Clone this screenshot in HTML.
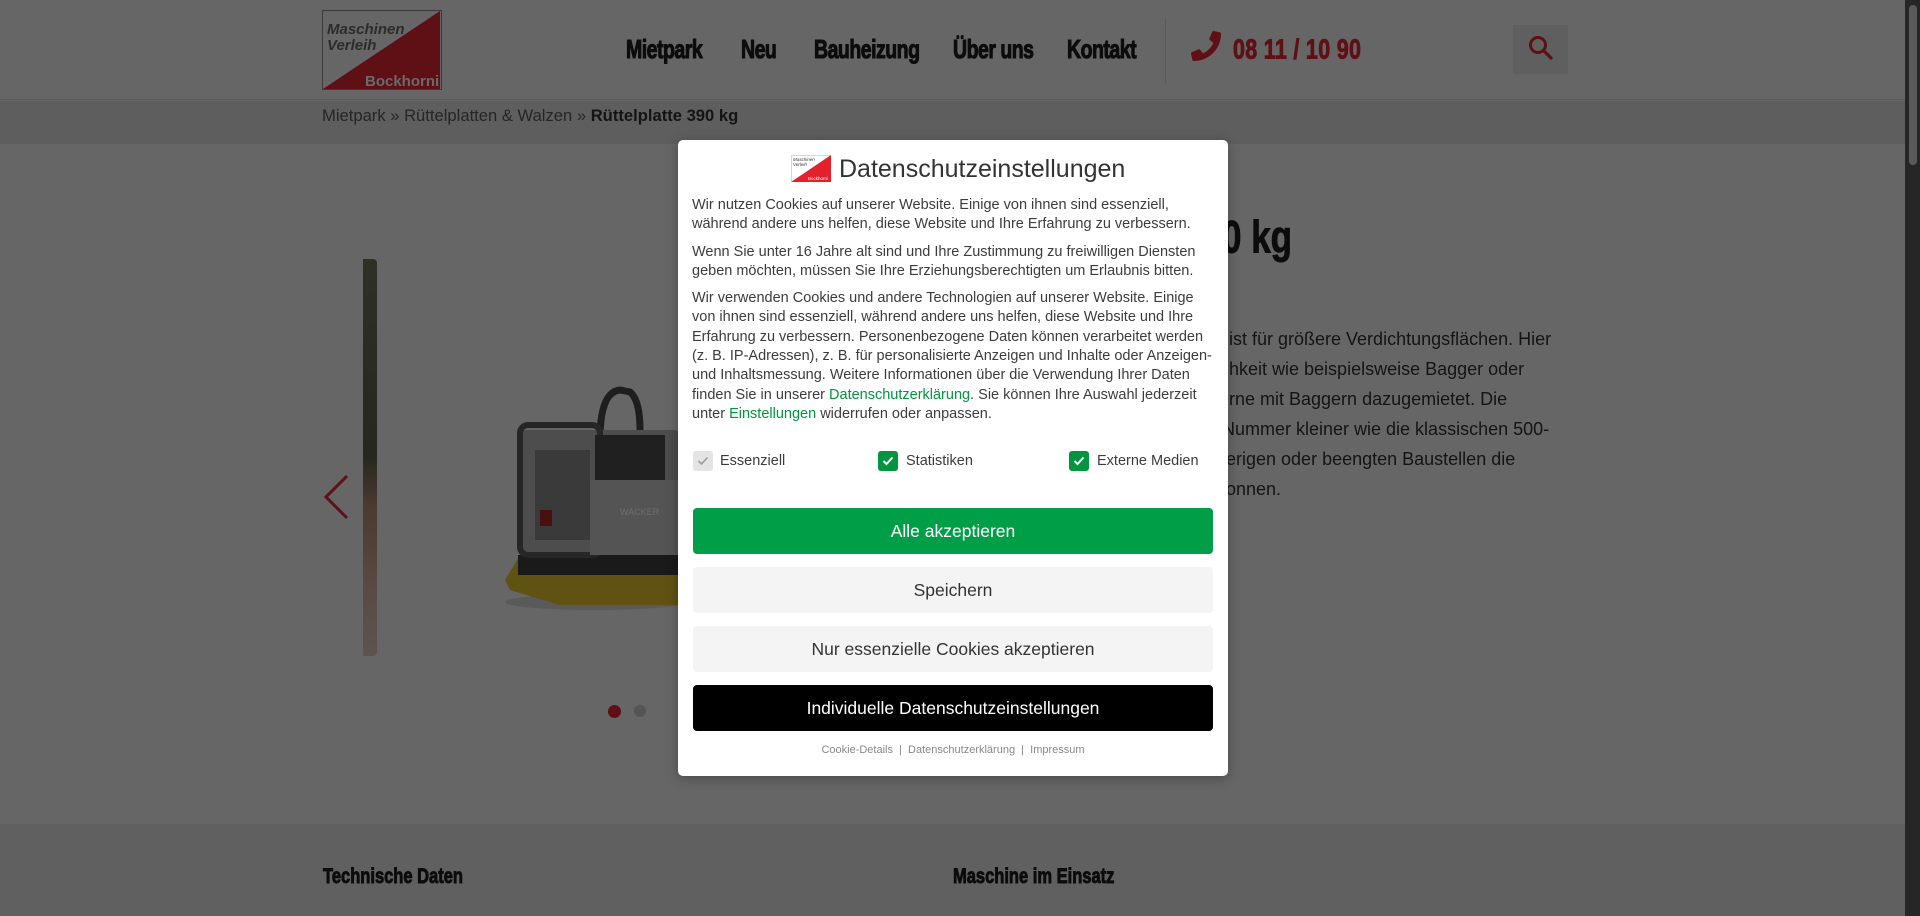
<!DOCTYPE html>
<html><head><meta charset="utf-8"><style>
*{margin:0;padding:0;box-sizing:border-box}
body{width:1920px;height:916px;overflow:hidden;background:#666;position:relative;font-family:"Liberation Sans",sans-serif}
.a{position:absolute;white-space:nowrap}
.nav{font-family:"Liberation Sans Narrow","Liberation Sans",sans-serif;font-weight:bold;color:#0c0c0c;font-size:19.5px;transform:scaleY(1.35);transform-origin:left center;letter-spacing:-0.5px;-webkit-text-stroke:0.8px #0c0c0c}
.cond{font-family:"Liberation Sans Narrow","Liberation Sans",sans-serif;font-weight:bold;transform:scaleY(1.3);transform-origin:left top;-webkit-text-stroke:0.7px currentColor}
.pt{color:#141414;font-size:18px;line-height:30px}
.modal{position:absolute;left:678px;top:140px;width:550px;height:636px;background:#fff;border-radius:5px;box-shadow:0 2px 12px rgba(0,0,0,.3)}
.m{position:absolute;white-space:nowrap;color:#3c3c3c}
.body p{font-size:14.5px;line-height:19.3px;color:#3c3c3c}
.body a{color:#019540;text-decoration:none}
.btn{position:absolute;left:15px;width:520px;height:46px;border-radius:4px;text-align:center;line-height:46px;font-size:17.5px}
.cb{position:absolute;top:311px;width:20px;height:20px;border-radius:3px;background:#019540}
.cb svg{position:absolute;left:4px;top:5px}
.cl{position:absolute;top:311px;line-height:20px;font-size:14.5px;color:#3c3c3c}
</style></head><body>
<div class="a" style="left:0;top:0;width:1905px;height:100px;border-bottom:1px solid #5a5a5a;background:#666"></div>
<svg class="a" style="left:322px;top:10px" width="120" height="80" viewBox="0 0 120 80">
<rect x="0.5" y="0.5" width="119" height="79" fill="#666" stroke="#3a3a3a"/>
<polygon points="118,1 118,79 1,79" fill="#5e1014"/>
<text x="5" y="24" font-family="Liberation Sans" font-style="italic" font-weight="bold" font-size="15" fill="#2c2c2c">Maschinen</text>
<text x="5" y="40" font-family="Liberation Sans" font-style="italic" font-weight="bold" font-size="15" fill="#2c2c2c">Verleih</text>
<text x="43" y="76" font-family="Liberation Sans" font-weight="bold" font-size="15" fill="#6a6a6a">Bockhorni</text>
</svg>
<div class="a nav" style="left:626px;top:39px">Mietpark</div>
<div class="a nav" style="left:741px;top:39px">Neu</div>
<div class="a nav" style="left:814px;top:39px">Bauheizung</div>
<div class="a nav" style="left:953px;top:39px">Über uns</div>
<div class="a nav" style="left:1067px;top:39px">Kontakt</div>
<div class="a" style="left:1165px;top:18px;width:1px;height:66px;background:#5a5a5a"></div>
<svg class="a" style="left:1191px;top:31px" width="30" height="30" viewBox="0 0 512 512"><path fill="#5e1014" d="M497 361l-112-48a24 24 0 0 0-28 7l-50 61A371 371 0 0 1 130 204l61-50a24 24 0 0 0 7-28L150 14a24 24 0 0 0-27-14L19 24A24 24 0 0 0 0 48c0 256 208 464 464 464a24 24 0 0 0 24-19l24-104a24 24 0 0 0-15-28z" transform="scale(-1,1) translate(-512,0)"/></svg>
<div class="a cond" style="left:1233px;top:34px;font-size:21.5px;color:#5e1014;letter-spacing:0.3px">08 11 / 10 90</div>
<div class="a" style="left:1513px;top:25px;width:55px;height:49px;background:#5f5f5f"></div>
<svg class="a" style="left:1528px;top:35px" width="26" height="26" viewBox="0 0 26 26"><circle cx="10" cy="10" r="7.5" fill="none" stroke="#5e1014" stroke-width="3"/><line x1="15.5" y1="15.5" x2="23" y2="23" stroke="#5e1014" stroke-width="3.2" stroke-linecap="round"/></svg>
<div class="a" style="left:0;top:101px;width:1905px;height:43px;background:#5e5e5e"></div>
<div class="a" style="left:322px;top:106px;font-size:16.6px;line-height:20px;color:#252525">Mietpark » Rüttelplatten &amp; Walzen » <b style="color:#141414">Rüttelplatte 390 kg</b></div>
<svg class="a" style="left:320px;top:472px" width="32" height="50" viewBox="0 0 32 50"><polyline points="27,4 6,25 27,46" fill="none" stroke="#5e1014" stroke-width="3"/></svg>
<div class="a" style="left:363px;top:259px;width:14px;height:397px;border-radius:0 4px 4px 0;background:linear-gradient(#2e3026,#26281f 50%,#4a3a30 62%,#5a4c44 85%,#5c5450)"></div>
<svg class="a" style="left:500px;top:370px" width="180" height="240" viewBox="0 0 180 240">
<ellipse cx="95" cy="232" rx="90" ry="8" fill="#5a5a5a"/>
<path d="M100 70 Q100 22 120 20 L130 22 Q140 30 140 60" fill="none" stroke="#1e1e1e" stroke-width="7"/>
<path d="M5 210 L20 185 L180 185 L180 235 L60 235 L10 220 Z" fill="#5f5212"/>
<rect x="18" y="185" width="162" height="20" fill="#1a1a1a"/>
<rect x="20" y="60" width="160" height="125" rx="6" fill="#4d4d4d"/>
<rect x="20" y="55" width="80" height="130" rx="8" fill="none" stroke="#262626" stroke-width="6"/>
<rect x="90" y="110" width="90" height="75" fill="#545454"/>
<rect x="35" y="80" width="55" height="90" fill="#3a3a3a"/>
<rect x="95" y="65" width="70" height="45" fill="#202020"/>
<rect x="40" y="140" width="12" height="16" fill="#4a1010"/>
<text x="120" y="145" font-size="9" fill="#6e6e6e" font-family="Liberation Sans">WACKER</text>
</svg>
<div class="a" style="left:608px;top:705px;width:13px;height:13px;border-radius:50%;background:#5e1014"></div>
<div class="a" style="left:634px;top:705px;width:12px;height:12px;border-radius:50%;background:#545454"></div>
<div class="a cond" style="left:1222px;top:212px;font-size:35px;color:#0c0c0c">0 kg</div>
<div class="a pt" style="left:1229px;top:324px">ist für größere Verdichtungsflächen. Hier</div>
<div class="a pt" style="left:1229px;top:354px">hkeit wie beispielsweise Bagger oder</div>
<div class="a pt" style="left:1229px;top:384px">rne mit Baggern dazugemietet. Die</div>
<div class="a pt" style="left:1222px;top:414px">Nummer kleiner wie die klassischen 500-</div>
<div class="a pt" style="left:1226px;top:444px">erigen oder beengten Baustellen die</div>
<div class="a pt" style="left:1226px;top:474px">onnen.</div>
<div class="a" style="left:0;top:824px;width:1905px;height:92px;background:#606060"></div>
<div class="a cond" style="left:323px;top:865px;font-size:16.5px;color:#0c0c0c">Technische Daten</div>
<div class="a cond" style="left:953px;top:865px;font-size:16.5px;color:#0c0c0c">Maschine im Einsatz</div>
<div class="a" style="left:1905px;top:0;width:15px;height:916px;background:#262626"></div>
<div class="a" style="left:1909px;top:5px;width:8px;height:160px;border-radius:4px;background:#5a5a5a"></div>
<div class="modal">
<svg class="m" style="left:113px;top:15px" width="40" height="27" viewBox="0 0 40 27"><rect x="0.5" y="0.5" width="39" height="26" fill="#fff" stroke="#bbb" stroke-width=".6"/><polygon points="40,0 40,27 0,27" fill="#e2212a"/><text x="2" y="6" font-size="4.5" font-style="italic" fill="#333" font-family="Liberation Sans">Maschinen</text><text x="2" y="11" font-size="4.5" font-style="italic" fill="#333" font-family="Liberation Sans">Verleih</text><text x="17" y="25" font-size="4.5" fill="#fff" font-family="Liberation Sans">Bockhorni</text></svg>
<div class="m" style="left:161px;top:13px;font-size:25px;line-height:32px;color:#333">Datenschutzeinstellungen</div>
<div class="m body" style="left:14px;top:56px">
<p>Wir nutzen Cookies auf unserer Website. Einige von ihnen sind essenziell,<br>während andere uns helfen, diese Website und Ihre Erfahrung zu verbessern.</p>
<p style="margin-top:8px">Wenn Sie unter 16 Jahre alt sind und Ihre Zustimmung zu freiwilligen Diensten<br>geben möchten, müssen Sie Ihre Erziehungsberechtigten um Erlaubnis bitten.</p>
<p style="margin-top:8px">Wir verwenden Cookies und andere Technologien auf unserer Website. Einige<br>von ihnen sind essenziell, während andere uns helfen, diese Website und Ihre<br>Erfahrung zu verbessern. Personenbezogene Daten können verarbeitet werden<br>(z. B. IP-Adressen), z. B. für personalisierte Anzeigen und Inhalte oder Anzeigen-<br>und Inhaltsmessung. Weitere Informationen über die Verwendung Ihrer Daten<br>finden Sie in unserer <a>Datenschutzerklärung</a>. Sie können Ihre Auswahl jederzeit<br>unter <a>Einstellungen</a> widerrufen oder anpassen.</p>
</div>
<div class="cb" style="left:15px;background:#e4e4e4"><svg width="12" height="10" viewBox="0 0 12 10"><polyline points="1.5,5 4.5,8 10.5,1.5" fill="none" stroke="#9a9a9a" stroke-width="1.6"/></svg></div>
<div class="cl" style="left:42px">Essenziell</div>
<div class="cb" style="left:200px"><svg width="12" height="10" viewBox="0 0 12 10"><polyline points="1.5,5 4.5,8 10.5,1.5" fill="none" stroke="#fff" stroke-width="2"/></svg></div>
<div class="cl" style="left:228px">Statistiken</div>
<div class="cb" style="left:391px"><svg width="12" height="10" viewBox="0 0 12 10"><polyline points="1.5,5 4.5,8 10.5,1.5" fill="none" stroke="#fff" stroke-width="2"/></svg></div>
<div class="cl" style="left:419px">Externe Medien</div>
<div class="btn" style="top:368px;background:#019e48;color:#fff">Alle akzeptieren</div>
<div class="btn" style="top:427px;background:#f4f4f4;color:#333">Speichern</div>
<div class="btn" style="top:486px;background:#f4f4f4;color:#333">Nur essenzielle Cookies akzeptieren</div>
<div class="btn" style="top:545px;background:#000;color:#fff">Individuelle Datenschutzeinstellungen</div>
<div class="m" style="left:0;width:550px;text-align:center;top:604px;font-size:11px;color:#888">Cookie-Details &nbsp;|&nbsp; Datenschutzerklärung &nbsp;|&nbsp; Impressum</div>
</div>
</body></html>
